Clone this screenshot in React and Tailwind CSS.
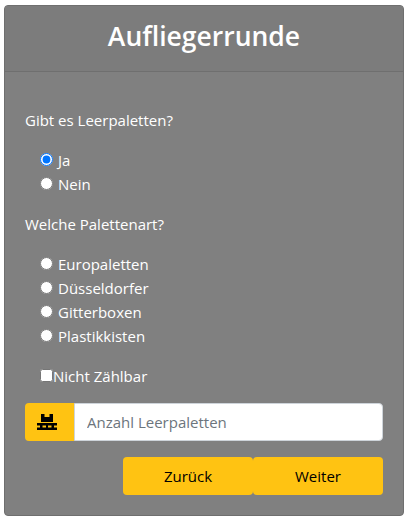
import React from "react";

function Radio({ label, checked, name }) {
  return (
    <label className="flex h-6 items-center">
      <input type="radio" name={name} defaultChecked={checked} className="m-0 mb-[1px] ml-[15px] mr-[5px] h-[13px] w-[13px]" />
      <span>{label}</span>
    </label>
  );
}

export default function App() {
  return (
    <div className="min-h-[522px] bg-white pl-1 pr-[6px] pt-[5px] text-white [font-family:'Open_Sans','Noto_Sans',sans-serif]">
      <div className="w-[400px] rounded border border-[#6f6f6f] bg-[#808080]">
        <div className="flex h-[66px] items-center justify-center border-b border-[#6f6f6f] bg-[#7c7c7c] pb-[5px]">
          <h1 className="text-[26.5px] font-semibold leading-none">Aufliegerrunde</h1>
        </div>
        <div className="px-5 pb-5 pt-9 text-[15px] leading-6">
          <p>Gibt es Leerpaletten?</p>
          <div className="mt-4">
            <Radio name="a" label="Ja" checked />
            <Radio name="a" label="Nein" />
          </div>
          <p className="mt-4">Welche Palettenart?</p>
          <div className="mt-4">
            <Radio name="b" label="Europaletten" />
            <Radio name="b" label="Düsseldorfer" />
            <Radio name="b" label="Gitterboxen" />
            <Radio name="b" label="Plastikkisten" />
          </div>
          <label className="mt-4 flex h-6 items-center pl-[15px]">
            <input type="checkbox" className="m-0 mb-[1px] h-[13px] w-[13px]" />
            <span>Nicht Zählbar</span>
          </label>
          <div className="mt-[15px] flex h-[38px]">
            <div className="flex w-[49px] items-center rounded-l bg-[#ffc312] pl-3">
              <svg viewBox="0 0 20 16" className="h-4 w-5" fill="#000">
                <path d="M4 0h3.500v3h5v-3h3.500v8h-12z" />
                <path d="M0 9h20v2.500h-3v2h3v2.500h-20v-2.500h3v-2h-3zM5.500 11.500v2h3.500v-2zM11 11.500v2h3.500v-2z" />
              </svg>
            </div>
            <input
              placeholder="Anzahl Leerpaletten"
              className="min-w-0 flex-1 rounded-r border border-[#ced4da] bg-white px-3 text-[15px] text-[#495057] outline-none placeholder:text-[#6c757d]"
            />
          </div>
          <div className="mt-4 flex justify-end">
            <button className="h-[38px] w-[130px] rounded bg-[#ffc312] text-black">Zurück</button>
            <button className="h-[38px] w-[130px] rounded bg-[#ffc312] text-black">Weiter</button>
          </div>
        </div>
      </div>
    </div>
  );
}
